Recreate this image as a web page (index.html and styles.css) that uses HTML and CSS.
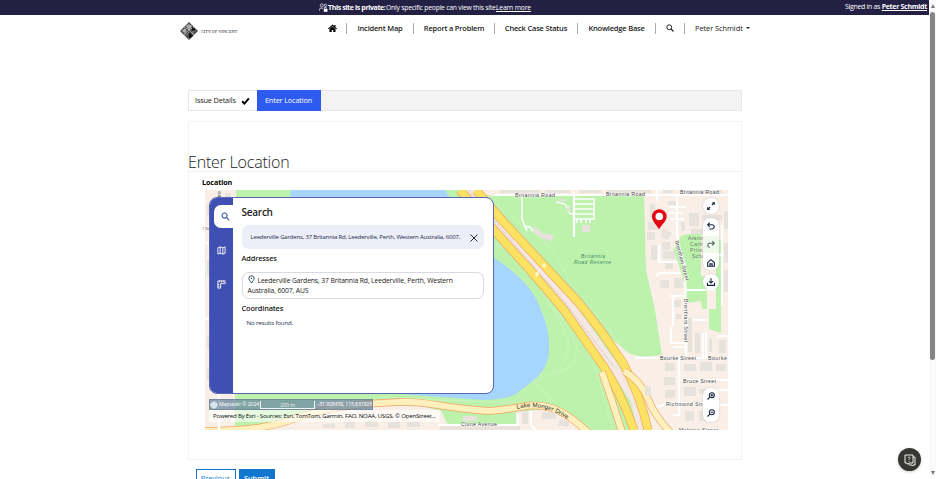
FILE: index.html
```html
<!DOCTYPE html>
<html lang="en">
<head>
<meta charset="utf-8">
<title>Enter Location</title>
<link rel="stylesheet" href="styles.css">
</head>
<body>
<div class="page">
  <div class="notice">
    <div class="notice-main">
      <svg class="people" viewBox="0 0 9 9"><g fill="none" stroke="#fff" stroke-width=".7"><circle cx="2.7" cy="2.4" r="1.5"/><circle cx="6.4" cy="2.3" r="1.2"/><path d="M.5 7.7V6.4Q.6 5.2 1.8 5.2H4.5M5 4.7h2.5"/></g><path fill="#fff" d="M4.8 6h3.7v2.8H4.8z"/><path d="M5.6 6V5.2q1-1 2 0V6" fill="none" stroke="#fff" stroke-width=".6"/></svg>
      <b class="t-private">This site is private:</b><span class="t-only">Only specific people can view this site.</span><a class="t-learn">Learn more</a>
    </div>
    <div class="signed">Signed in as <b>Peter Schmidt</b></div>
  </div>
  <header class="header">
    <div class="brand">
      <svg class="logo" viewBox="0 0 18 18"><path fill="#484848" d="M9 0l9 9-9 9-9-9z"/><path fill="#999" d="M9 1.500l3 3-3 4-3-4zM2 9l3-2.500L7 9l-3 2z"/><g stroke="#ddd" fill="none" stroke-width=".6"><path d="M4 5l5 3 5-3M9 8l-5 5M9 8l5 5M6.500 3L9 6l2.500-3M2 9l3-2v5M16 9l-3-2v5"/><path d="M6 14l3-4 3 4M8 16h2" stroke="#bbb"/></g><path fill="#111" d="M9 10l4 4-4 3zM12 5l4 3-4 1z"/></svg>
      <span>CITY OF VINCENT</span>
    </div>
    <nav class="nav">
      <svg class="home" viewBox="0 0 18 16"><path d="M9 1L0 9l1.500 1.500L9 4l7.500 6.500L18 9l-3-2.700V2h-2.500v2z"/><path d="M3 10l6-5 6 5v6h-4.500v-4h-3v4H3z"/></svg>
      <i></i><span class="n1">Incident Map</span><i></i><span class="n2">Report a Problem</span><i></i><span class="n3">Check Case Status</span><i></i><span class="n4">Knowledge Base</span><i></i>
      <svg class="find" viewBox="0 0 16 16"><circle cx="6.500" cy="6.500" r="4.800" fill="none" stroke="#222" stroke-width="2"/><path d="M10 10l5 5" stroke="#222" stroke-width="2.500"/></svg>
      <i></i><span class="user">Peter Schmidt</span><b class="caret"></b>
    </nav>
  </header>
  <main class="content">
    <div class="steps">
      <div class="step done"><span>Issue Details</span><svg viewBox="0 0 16 14"><path d="M2 7.500l4 4L14 2.500" fill="none" stroke="#000" stroke-width="3.400"/></svg></div>
      <div class="step active"><span>Enter Location</span></div>
    </div>
    <section class="card">
      <h1><span>Enter Location</span></h1>
      <div class="label">Location</div>
      <div class="map">
        <svg class="tiles" viewBox="205 190 523 239.500">
          <rect x="205" y="190" width="523" height="240" fill="#faefe6"/>
          <path fill="#bdf2ad" d="M236 190H460L493 196H644L646 270 655 310 662 355 635 358 600 330 672 430H450L441 411 400 401H320L290 430H235z"/>
          <path fill="#faefe6" d="M400 405L440 411V430H250L300 417 370 407zM438 425h78V412l42-4 30 22H438zM612 345q24 16 50 10v75H650z"/>
          <path fill="#bdf2ad" d="M681 236l7-2h13V276h6V309h-5l-1-8-15 2q0-20-8-40l-5-12zM716 240h5v69h-5zM709 309h12v24l-12-4z"/>
          <path fill="#a6d6ff" d="M291 190H445Q465 222 493 257C520 275 534 290 541 310Q550 330 549 350C548 375 530 382 516 394Q505 400 483 400L440 397 400 394H345L325 391H270z"/>
          <g fill="none" stroke="#d9f7cf" stroke-width=".7" stroke-dasharray="2 1"><path d="M481 190Q505 215 530 230T568 280Q610 330 630 358M493 240Q525 263 552 306L568 338Q571 360 552 374M547 303q25 22 30 45-2 23-24 25-20 7-38 28M578 350q12 5 20 26l15 54M380 397l60 3 90 3M536 385q9 3 15 18"/></g>
          <g id="roads" fill="none">
            <path stroke="#f5e8e2" stroke-width="9" d="M468 190L498 225 570 305 614 367 635 400 642 430"/>
            <path stroke="#bbb" stroke-width=".6" stroke-dasharray="3 1" d="M468 190L497 224 567 305 614 367"/>
            <path stroke="#f0a565" stroke-width="9" d="M460 190L493 229 530 270 564 310 604 367Q622 395 634 430M476 190L500 218 579 303 601 331 623 363Q641 397 648 430"/>
            <path stroke="#fbe262" stroke-width="7.600" d="M460 190L493 229 530 270 564 310 604 367Q622 395 634 430M476 190L500 218 579 303 601 331 623 363Q641 397 648 430"/>
            <path stroke="#f2a35f" stroke-width="7.500" d="M602 372q10 28 20 60M624 371q17 10 24 28t24 35M205 431C250 430 270 428 300 417S370 403 400 402 440 408 490 411Q510 409 530 405.500C555 404 570 416 589 433"/>
            <path stroke="#fff0bd" stroke-width="6.200" d="M602 372q10 28 20 60M624 371q17 10 24 28t24 35M205 431C250 430 270 428 300 417S370 403 400 402 440 408 490 411Q510 409 530 405.500C555 404 570 416 589 433"/>
          </g>
          <g fill="none" stroke="#fff" stroke-width="2.200">
            <path d="M495 195H728M574 192V237"/>
            <path stroke-width="1.500" d="M574 199h20v20h-20M574 204h20M574 209h20M574 214h20M577 219v4M581 219v4M586 219v4M590 219v4"/>
            <path stroke-width="1.400" d="M522 195v24l5 12M524 226l6 1 3 4M556 202l9 2 5 10h4"/>
            <path d="M657 190v11M677 194v34Q677 244 685 266l1 48v46M669 207h17M669 213h14M670 219h14M659 245v18M659 262h19M657 276q0-4 7-3h16M709 255h19M722 225v80M686 290h29M670 296h16M673 296v30M686 320h21M706 332v25M671 327v16h14M673 347h12M635 358h93M679 358v57h-6M681 380h47M657 407l12-4h34M703 405h25M717 336h11M714 390h14M703 358v-25M438 425h80v-11M531 411v14l5 5M219 190v240M205 243h12M205 319h15"/>
          </g>
          <g fill="#e7e3dc">
            <path d="M650 204h5v13h-5zM668 201h8v4h-8zM648 222h9v8h-9zM647 232h8v8h-8zM663 228l9 5-4 7-7-3zM662 242h8v8h-8zM651 245h6v15h-6zM663 251h12v8h-12zM665 263h8v6h-8zM660 280h9v8h-9zM674 278h9v10h-9zM689 213h10v13h-10zM702 215h20v5h-20zM724 211h4v18h-4zM681 222h4v9h-4zM691 229h20v5h-20zM724 243h4v20h-4zM724 270h4v22h-4zM688 318h4v34h-4zM695 333h5v20h-5zM709 338h3v14h-3zM719 340h7v13h-7zM674 300h7v7h-7zM676 314h5v5h-5zM665 363h10v8h-10zM664 377h11v8h-11zM665 390h10v8h-10zM684 364h12v7h-12zM700 362h12v9h-12zM716 364h10v7h-10zM684 387h12v9h-12zM699 389h10v5h-10zM685 411h9v10h-9zM699 411h14v10h-14zM645 386h6v10h-6zM534 226l5 4 3 3-2 4-7-5zM542 233l12 2-2 6-12-3zM582 225h8v7h-8zM559 199h7v2h-7zM567 206h3v6h-3zM207 205h5v10h-5zM225 193h6v12h-6zM207 260h6v15h-6zM225 235h6v12h-6zM207 335h8v14h-8zM207 368h7v12h-7zM224 400h8v8h-8zM222 414h8v8h-8zM463 416h14v5h-14zM522 411h6v13h-6zM542 412h14v7h-14zM560 419l10 3-2 5-10-2zM440 426h80v4h-80z"/>
            <path d="M500 190h40v3h-40zM545 190h25v3h-25zM579 190h22v3h-22zM607 190h44v3h-44zM663 190h10v3h-10zM681 190h41v3h-41zM323 424h12v4h-12zM345 422h10v6h-10zM365 421h13v6h-13zM388 422h12v6h-12zM407 421h13v6h-13z"/>
          </g>
          <g fill="#fff6c5" stroke="#fff0a0" stroke-width=".4"><path d="M542 265l3-2 1 4-3 1zM535 273l3-2 1 4-3 2z"/></g>
          <g class="road">
            <text x="515" y="196.500" textLength="40">Britannia Road</text>
            <text x="606" y="195.500" textLength="39">Britannia Road</text>
            <text x="680" y="194" textLength="39">Britannia Road</text>
            <text x="660" y="360" textLength="36">Bourke Street</text>
            <text x="708" y="360" textLength="19">Bourke</text>
            <text x="683" y="383" textLength="33">Bruce Street</text>
            <text x="666" y="405.500" textLength="40">Richmond Stre</text>
            <text x="679" y="431.500" textLength="39">Melrose Street</text>
            <text x="461" y="426" textLength="36">Clune Avenue</text>
            <text transform="translate(675 241) rotate(75)" textLength="41">Brentham Street</text>
            <text transform="translate(684 299) rotate(90)" textLength="43">Brentham Street</text>
            <text transform="translate(205 286) rotate(-90)" textLength="43">Harbourne Street</text>
            <text transform="translate(221 201) rotate(-90)" textLength="10">Stre</text>
            <path id="lake-drive" fill="none" d="M517 409Q544 402 570 421"/>
            <text class="drive"><textPath href="#lake-drive" textLength="53">Lake Monger Drive</textPath></text>
          </g>
          <g class="park"><text x="581" y="258" textLength="24">Britannia</text><text x="574" y="264" textLength="37">Road Reserve</text></g>
          <g class="school"><text x="688" y="240" textLength="24">Aranmore</text><text x="690" y="246" textLength="22">Catholic</text><text x="690" y="252" textLength="21">Primary</text><text x="692" y="258" textLength="17">School</text></g>
          <path fill="#e30613" d="M659 229.500C656 224 652 221 652 216.500a7.300 7.300 0 0 1 14.600 0C666.600 221 662 224 659 229.500z"/><circle cx="659.300" cy="216.500" r="3.800" fill="#fff"/>
        </svg>
        <div class="gutter-text">1 St</div>
        <div class="widget">
          <div class="rail">
            <div class="rail-tab"><svg viewBox="0 0 10 10"><circle cx="4" cy="4" r="2.800"/><path d="M6 6l3.200 3.200"/></svg></div>
            <svg class="rail-icon" viewBox="0 0 10 10"><path d="M1 2l2.500-1 3 1L9 1v7l-2.500 1-3-1L1 9zM3.500 1v7M6.500 2v7"/></svg>
            <svg class="rail-icon ruler" viewBox="0 0 10 10"><path d="M1 1h8v3H4v5H1zM3 1v1.500M5 1v1.500M7 1v1.500M1 5h1.500M1 7h1.500"/></svg>
          </div>
          <div class="results">
            <h2><span>Search</span></h2>
            <div class="query"><span>Leederville Gardens, 37 Britannia Rd, Leederville, Perth, Western Australia, 6007,</span><svg viewBox="0 0 10 10"><path d="M1.500 1.500l7 7M8.500 1.500l-7 7" stroke="#1f2b4d"/></svg></div>
            <h3 class="addr"><span>Addresses</span></h3>
            <div class="result"><svg viewBox="0 0 8 10"><path d="M4 9C2.500 6.500 1 5.500 1 3.700a3 3 0 0 1 6 0C7 5.500 5.500 6.500 4 9z" fill="none" stroke="#17294d"/><circle cx="4" cy="3.700" r=".8" fill="#17294d"/></svg><span class="r1">Leederville Gardens, 37 Britannia Rd, Leederville, Perth, Western</span><br><span class="r2">Australia, 6007, AUS</span></div>
            <h3 class="coord"><span>Coordinates</span></h3>
            <p><span>No results found.</span></p>
          </div>
        </div>
        <div class="tools">
          <div class="tool"><svg viewBox="0 0 12 12"><path d="M7 5l3-3M7.500 2H10v2.500M5 7l-3 3M2 7.500V10h2.500"/></svg></div>
          <div class="stack">
            <svg viewBox="0 0 12 12"><path d="M4.500 2L2 4.500 4.500 7M2 4.500h5.500q2.500.2 2.500 2.500T7.500 9.500H4"/></svg>
            <svg class="dim" viewBox="0 0 12 12"><path d="M7.500 2L10 4.500 7.500 7M10 4.500H4.500Q2 4.700 2 7t2.500 2.500"/></svg>
            <svg viewBox="0 0 12 12"><path d="M2 5.500L6 2l4 3.500V10H2zM4.700 10V7h2.600v3"/></svg>
          </div>
          <div class="tool"><svg viewBox="0 0 12 12"><path d="M6 1.500V7M3.500 5L6 7.300 8.500 5M1.800 7v3h8.400V7"/></svg></div>
          <div class="stack zoom">
            <svg viewBox="0 0 12 12"><circle cx="7" cy="5" r="3"/><path d="M5 7l-3.200 3.200M5.500 5h3M7 3.500v3"/></svg>
            <svg viewBox="0 0 12 12"><circle cx="7" cy="5" r="3"/><path d="M5 7l-3.200 3.200M5.500 5h3"/></svg>
          </div>
        </div>
        <div class="scale">
          <svg viewBox="0 0 8 8"><path fill="#d8e5ed" d="M4 0l4 3-1 3-3 2-3-2-1-3z"/></svg><span class="maker">Maptaskr © 2024</span><span class="bar">200 m</span><span class="pos">-31.928458, 115.831925</span>
        </div>
        <div class="credit"><span>Powered By Esri - Sources: Esri, TomTom, Garmin, FAO, NOAA, USGS, © OpenStreet...</span></div>
      </div>
    </section>
    <div class="actions"><button class="prev">Previous</button><button class="submit">Submit</button></div>
  </main>
  <div class="chat"><svg viewBox="0 0 14 14"><path d="M2 2h8v8H6l-1 1.500L4 10H2zM10 4h2v8h-2l-.5 1L9 12H6" fill="none" stroke="#eee"/><path d="M5 5q.2-1 1.200-1 1.200.3.800 1.200L6 6.200V7M6 8v.8" fill="none" stroke="#eee" stroke-width=".8"/></svg></div>
</div>
<div class="scroll"><i class="up"></i><i class="thumb"></i><i class="down"></i></div>
</body>
</html>
```

FILE: styles.css
```css
* { box-sizing: border-box; }
body { margin: 0; width: 936px; height: 479px; overflow: hidden; display: grid; grid-template-columns: 929px 7px; background: #fff; font: 7px/1.2 "Open Sans", "Noto Sans", sans-serif; color: #222; }
svg { display: block; flex: none; }
span, b, a { white-space: nowrap; }
.page { position: relative; height: 479px; overflow: hidden; }
.notice { height: 15px; background: #232044; color: #fff; display: flex; align-items: center; justify-content: space-between; padding: 0 2px 0 319px; font-size: 7px; }
.notice-main { display: flex; align-items: center; height: 15px; line-height: 10px; }
.people { width: 9px; height: 9px; }
.t-private { width: 58px; letter-spacing: -.37px; }
.t-only { width: 110px; font-size: 6.8px; letter-spacing: -.23px; }
.t-learn { font-size: 6.8px; letter-spacing: -.2px; }
.t-learn, .signed b { text-decoration: underline; }
.signed { letter-spacing: -.3px; }
.header { height: 75px; display: flex; align-items: flex-start; padding: 7px 0 0 180px; }
.brand { width: 148px; display: flex; align-items: center; font: 4.3px "Liberation Serif", serif; gap: 3px; color: #111; }
.logo { width: 18px; height: 18px; }
.nav { display: flex; align-items: center; height: 12px; font-size: 7.5px; font-weight: 600; color: #222; letter-spacing: -.2px; }
.nav i { width: 1px; height: 11px; background: #aaa; }
.nav span { text-align: center; }
.home { width: 9px; height: 8px; margin-right: 9px; }
.n1 { width: 66px; }
.n2 { width: 80px; }
.n3 { width: 82px; }
.n4 { width: 77px; }
.find { width: 8px; height: 8px; margin: 0 10px 0 10px; }
.nav .user { font-weight: 400; margin-left: 10px; letter-spacing: -.1px; }
.caret { margin-left: 3px; border: 2px solid transparent; border-top-color: #222; border-bottom: 0; }
.content { width: 554px; margin-left: 188px; }
.steps { height: 21px; display: flex; background: #f3f3f3; border: 1px solid #e8e8e8; font-size: 7.3px; letter-spacing: -.15px; }
.step { display: flex; align-items: center; margin: -1px 0; }
.done { width: 67.5px; padding-left: 6px; gap: 5px; background: #fff; border: solid #e8e8e8; border-width: 1px 0; }
.done svg { width: 9px; height: 8px; }
.active { width: 64px; justify-content: center; background: #2d5bf0; color: #fff; }
.card { height: 339px; margin-top: 10px; border: 1px solid #f3f3f3; }
h1, h2, h3, p { margin: 0; font-weight: 600; }
h1 { height: 50px; padding-top: 30px; margin-left: -1px; border-bottom: 1px solid #eee; font-size: 16px; letter-spacing: -.2px; line-height: 20px; font-weight: 300; color: #222; }
.label { height: 18px; padding: 5px 0 0 13px; font-size: 7.2px; line-height: 10px; font-weight: 700; letter-spacing: -.1px; color: #000; }
.map { position: relative; width: 523px; height: 240px; margin-left: 16px; }
.tiles { width: 523px; height: 239.500px; }
.road text { font: 5.4px "Liberation Sans", sans-serif; fill: #444; stroke: #fff; stroke-width: .7px; paint-order: stroke; }
.road .drive { font-size: 6.2px; fill: #333; stroke: none; }
.park text { font: italic 5px "Liberation Sans", sans-serif; fill: #438a60; }
.school text { font: 5px "Liberation Sans", sans-serif; fill: #6e7771; }
.gutter-text { position: absolute; left: -3px; top: 37px; font-size: 4px; color: #555; }
.widget { position: absolute; left: 4px; top: 7px; width: 284.5px; height: 196.5px; display: flex; background: #fff; border: 1px solid #5965b7; border-radius: 8px; overflow: hidden; }
.rail { width: 23px; background: #4050b2; padding-top: 7px; display: flex; flex-direction: column; align-items: flex-end; }
.rail-tab { width: 19px; height: 23px; background: #fff; border-radius: 7px 0 0 7px; display: grid; place-items: center; padding-left: 4px; }
.rail svg { width: 9px; height: 9px; fill: none; stroke: #fff; stroke-width: 1; }
.rail .rail-tab svg { stroke: #4050b2; stroke-width: 1.2; }
.rail .rail-icon { margin: 18px 7px 0 0; }
.rail .ruler { margin-top: 25px; }
.results { width: 250px; padding-left: 8.5px; }
h2 { height: 27px; padding-top: 7px; font-size: 10px; letter-spacing: -.25px; line-height: 14px; }
.query { width: 242px; height: 24px; border-radius: 7px; background: #eceef8; display: flex; align-items: center; justify-content: space-between; padding: 1px 5px 0 9px; font-size: 6px; letter-spacing: -.18px; color: #1d2b4d; }
.query svg { width: 10px; height: 10px; }
h3 { font-size: 7.4px; line-height: 10px; letter-spacing: -.15px; }
.addr { height: 23px; padding-top: 4px; }
.result { width: 242px; height: 27px; border: 1px solid #d9dae0; border-radius: 7px; padding: 2px 5px; font-size: 6.8px; letter-spacing: -.13px; line-height: 10px; color: #222; }
.result svg { width: 7px; height: 9px; display: inline-block; vertical-align: -1px; margin-right: 3px; }
.coord { height: 20px; padding-top: 4px; }
.results p { font-size: 6.1px; letter-spacing: -.15px; line-height: 8px; font-weight: 400; padding-left: 5px; color: #1d2b4d; }
.tools { position: absolute; left: 497.5px; top: 8px; width: 16px; height: 223.5px; display: flex; flex-direction: column; gap: 4px; }
.tools svg { width: 10px; height: 10px; fill: none; stroke: #15233f; stroke-width: 1.300; }
.tool { width: 16px; height: 16px; border-radius: 50%; background: #fff; display: grid; place-items: center; box-shadow: 0 0 2px #99a8; }
.stack { width: 16px; height: 52px; border-radius: 7px; background: #fff; display: flex; flex-direction: column; align-items: center; justify-content: space-around; box-shadow: 0 0 2px #99a8; }
.stack .dim { width: 16px; height: 17px; padding: 3px; background: #eef8eb; stroke: #4c6460; }
.zoom { height: 34px; margin-top: auto; }
.scale { position: absolute; left: 4px; top: 209px; width: 164px; height: 11px; display: flex; align-items: center; background: #6b87a0bb; border: 1px solid #5e779188; color: #fff; font-size: 5.2px; letter-spacing: -.1px; }
.scale svg { width: 8px; height: 8px; }
.maker { width: 42px; margin-left: 1px; }
.bar { width: 55px; height: 8px; text-align: center; line-height: 8px; border: solid #fff; border-width: 0 1px 1px; opacity: .9; }
.pos { margin-left: 3px; letter-spacing: -.15px; }
.credit { position: absolute; left: 4px; top: 220px; width: 231px; height: 12px; padding-left: 4px; background: #ffffff99; font-size: 6.1px; letter-spacing: -.22px; line-height: 12px; color: #111; }
.actions { display: flex; gap: 3px; padding: 9px 0 0 7.5px; }
.actions button { height: 18px; border: 1px solid #1177ce; border-radius: 0; padding: 0; font: 7.3px/14px "Open Sans", sans-serif; }
.actions .prev { width: 40px; background: #fff; color: #1177ce; }
.actions .submit { width: 36px; background: #1177ce; color: #fff; font-weight: 600; }
.chat { position: absolute; left: 898px; top: 448px; width: 23px; height: 23px; border-radius: 50%; background: #373633; display: grid; place-items: center; box-shadow: 0 1px 3px #0003; }
.chat svg { width: 14px; height: 14px; }
.scroll { background: #fafafa; display: flex; flex-direction: column; align-items: center; padding: 4px 0; }
.up { border: 2.500px solid transparent; border-bottom: 4px solid #777; border-top: 0; }
.thumb { width: 5px; height: 348px; margin-top: 4px; background: #858585; border-radius: 3px; }
.down { margin-top: auto; border: 2.500px solid transparent; border-top: 4px solid #777; border-bottom: 0; }
```
